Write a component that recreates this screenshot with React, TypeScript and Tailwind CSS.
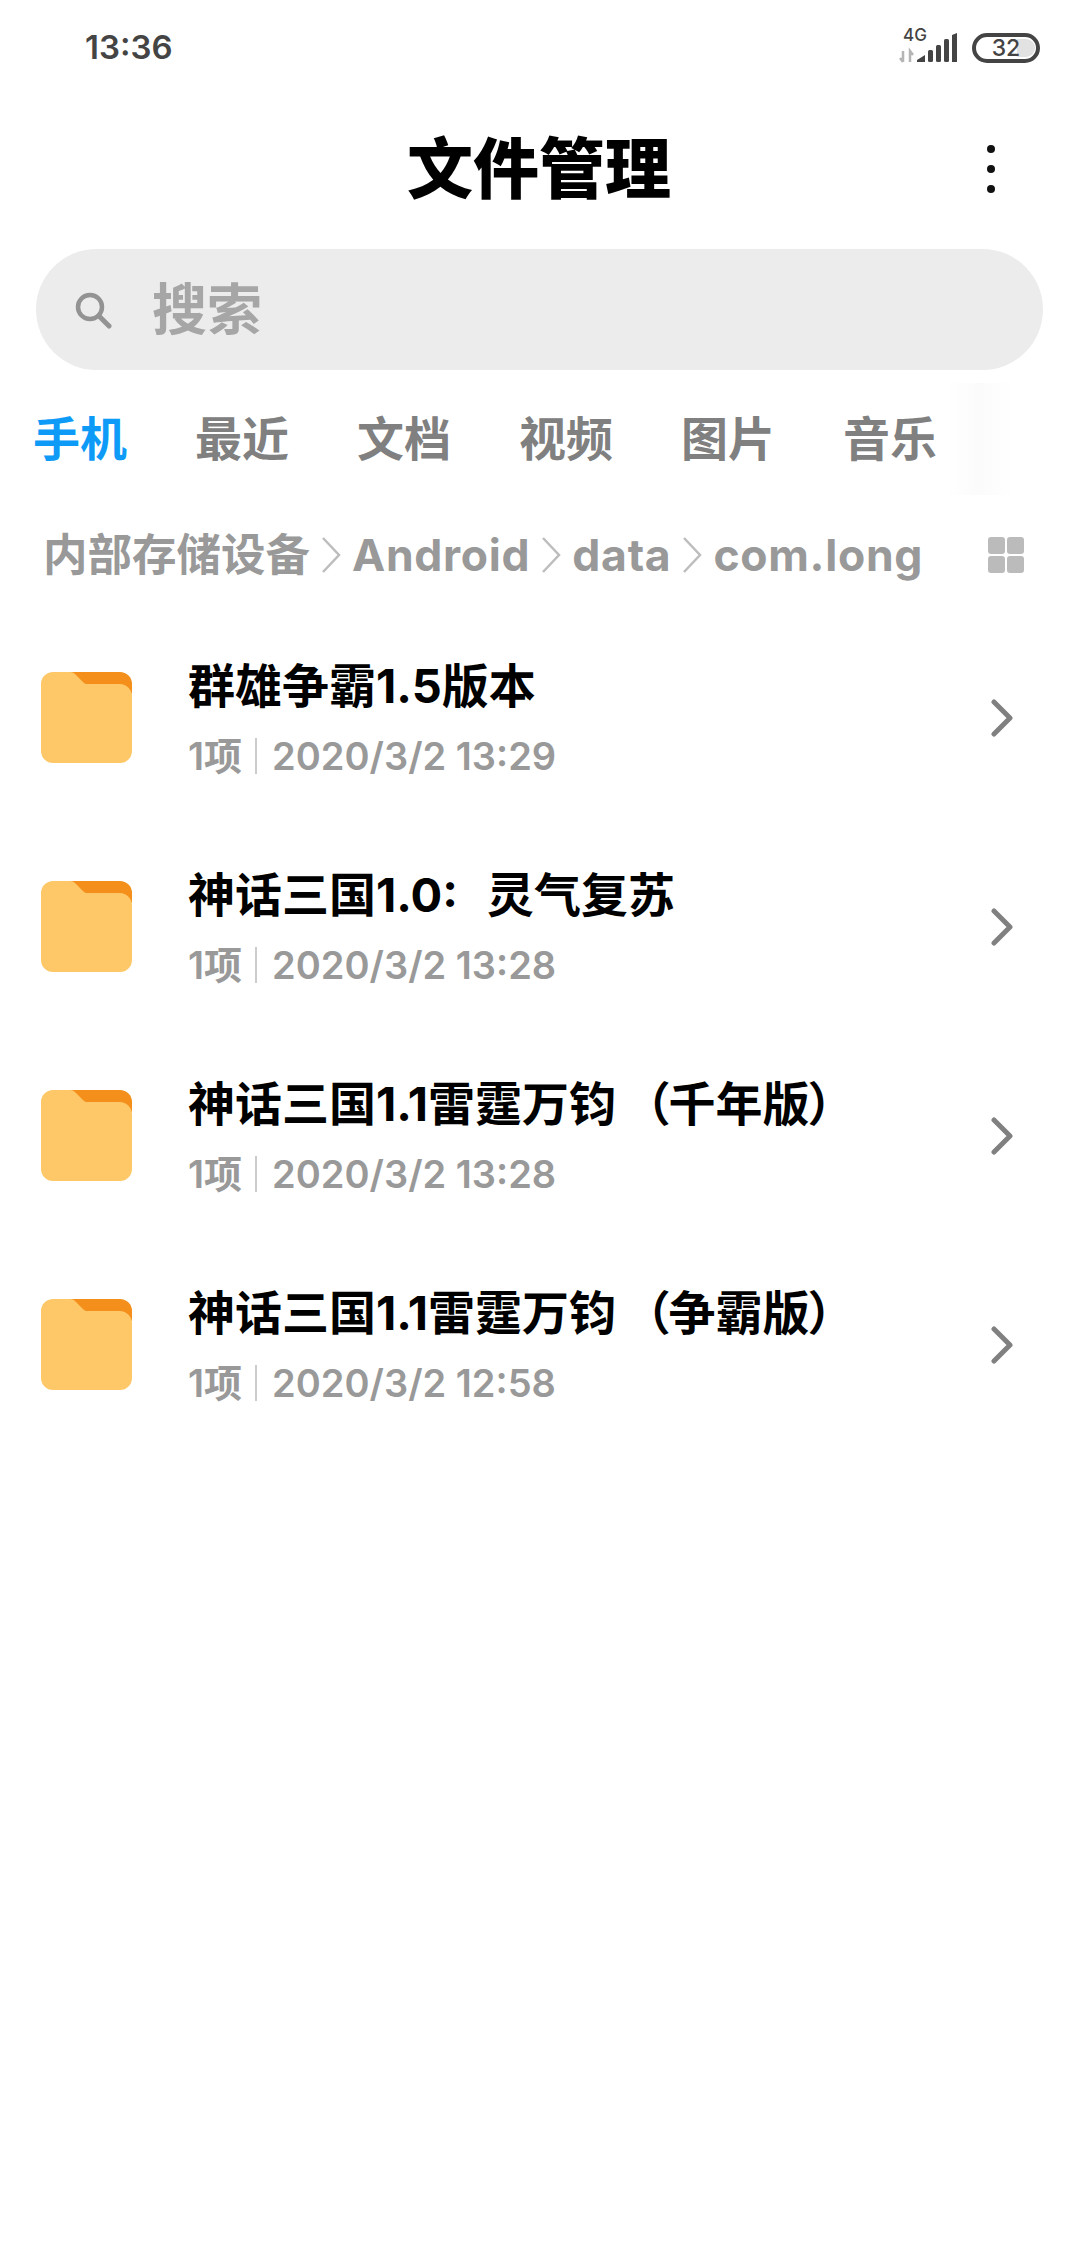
const FONT = "font-['Inter','Noto_Sans_CJK_SC',sans-serif]";

const tabs = ["手机", "最近", "文档", "视频", "图片", "音乐"];

const folders = [
  { name: "群雄争霸1.5版本", time: "2020/3/2 13:29" },
  { name: "神话三国1.0: 灵气复苏", time: "2020/3/2 13:28" },
  { name: "神话三国1.1雷霆万钧 （千年版）", time: "2020/3/2 13:28" },
  { name: "神话三国1.1雷霆万钧 （争霸版）", time: "2020/3/2 12:58" },
];

function Signal() {
  return (
    <svg width="62" height="32" viewBox="0 0 62 32" className="block">
      <path d="M6 20v11M3 27l3 4M13 31V20l3 4" stroke="#b5b5b5" strokeWidth="2.5" fill="none" />
      <path d="M20 31v-2l8-5v7z" fill="#444" />
      <rect x="31" y="19" width="5" height="12" rx="1.5" fill="#444" />
      <rect x="39" y="14" width="5" height="17" rx="1.5" fill="#444" />
      <rect x="47" y="8" width="5" height="23" rx="1.5" fill="#444" />
      <path d="M55 4l5-2v29h-5z" fill="#444" />
    </svg>
  );
}

function Folder() {
  return (
    <svg width="91" height="91" viewBox="0 0 91 91" className="block shrink-0">
      <path d="M28 0h51a12 12 0 0 1 12 12v10L40 14z" fill="#f38f1a" />
      <path
        d="M12 0h17c3 0 4 1 6 3l7 7c2 2 3 2 5 2h32c6 0 12 5 12 12v55a12 12 0 0 1-12 12H12A12 12 0 0 1 0 79V12A12 12 0 0 1 12 0z"
        fill="#fec868"
      />
    </svg>
  );
}

function Crumb() {
  return (
    <svg width="22" height="38" viewBox="0 0 22 38" className="block shrink-0 mx-[10px]">
      <path d="M3 2l16 17L3 36" fill="none" stroke="#bdbdbd" strokeWidth="2.5" />
    </svg>
  );
}

export default function App() {
  return (
    <div className={`w-[1080px] h-[2248px] bg-white overflow-hidden ${FONT}`}>
      {/* status bar */}
      <div className="h-[94px] flex items-center justify-between pl-[85px] pr-[40px]">
        <span className="text-[33px] leading-none font-semibold text-[#444]">13:36</span>
        <div className="flex items-end gap-[13px]">
          <div className="relative w-[62px]">
            <span className="absolute left-[6px] top-[-4px] text-[17px] leading-none font-medium text-[#444]">4G</span>
            <Signal />
          </div>
          <div className="relative w-[68px] h-[30px] rounded-full border-[4px] border-[#444] flex items-center justify-center">
            <div className="absolute right-[1px] top-[2px] bottom-[2px] w-[18px] rounded-r-full bg-[#e2e2e2]" />
            <span className="relative text-[23px] leading-none font-medium text-[#444]">32</span>
          </div>
        </div>
      </div>

      {/* title */}
      <div className="h-[152px] pb-[2px] grid grid-cols-[1fr_auto_1fr] items-center">
        <div />
        <h1 className="text-[66px] leading-none font-black text-black mr-[2px]">文件管理</h1>
        <div className="flex justify-end pr-[85px]">
          <div className="flex flex-col gap-[12px]">
            <span className="w-[8px] h-[8px] rounded-full bg-[#111]" />
            <span className="w-[8px] h-[8px] rounded-full bg-[#111]" />
            <span className="w-[8px] h-[8px] rounded-full bg-[#111]" />
          </div>
        </div>
      </div>

      {/* search */}
      <div className="mt-[3px] ml-[36px] w-[1007px] h-[121px] rounded-full bg-[#ececec] flex items-center pl-[38px] gap-[40px]">
        <svg width="38" height="38" viewBox="0 0 38 38" className="block shrink-0">
          <circle cx="16" cy="16" r="12" fill="none" stroke="#939393" strokeWidth="4.5" />
          <path d="M25 25l10 10" stroke="#939393" strokeWidth="5" strokeLinecap="round" />
        </svg>
        <span className="text-[55px] leading-none font-bold text-[#a6a6a6]">搜索</span>
      </div>

      {/* tabs */}
      <div className="relative h-[140px] pl-[33px] pb-[4px] flex items-center gap-[68px]">
        {tabs.map((t, i) => (
          <span
            key={t}
            className={`w-[94px] shrink-0 text-[47px] leading-none font-bold ${i === 0 ? "text-[#0d9bf7]" : "text-[#808080]"}`}
          >
            {t}
          </span>
        ))}
        <div className="absolute left-[946px] top-[13px] w-[66px] h-[112px] bg-gradient-to-r from-transparent via-[#fbfbfb] to-transparent" />
      </div>

      {/* breadcrumb */}
      <div className="h-[90px] pl-[43px] pr-[56px] flex items-center text-[44.5px] leading-none font-bold text-[#999]">
        <span>内部存储设备</span>
        <Crumb />
        <span className="tracking-[0.7px]">Android</span>
        <Crumb />
        <span className="tracking-[0.7px]">data</span>
        <Crumb />
        <span className="tracking-[0.7px]">com.long</span>
        <div className="ml-auto grid grid-cols-2 gap-[2px]">
          <span className="w-[17px] h-[17px] rounded-[3px] bg-[#bbb]" />
          <span className="w-[17px] h-[17px] rounded-[3px] bg-[#bbb]" />
          <span className="w-[17px] h-[17px] rounded-[3px] bg-[#bbb]" />
          <span className="w-[17px] h-[17px] rounded-[3px] bg-[#bbb]" />
        </div>
      </div>

      {/* list */}
      <div className="mt-[13px]">
        {folders.map((f) => (
          <div key={f.name} className="h-[209px] flex items-center pl-[41px] pr-[66px]">
            <Folder />
            <div className="ml-[56px] flex-1 min-w-0">
              <div className="text-[47px] leading-[58px] font-bold text-black whitespace-pre [font-feature-settings:'palt'] [word-spacing:18px]">
                {f.name}
              </div>
              <div className="mt-[19px] flex items-center text-[38px] leading-[44px] font-semibold text-[#999]">
                <span>1项</span>
                <span className="ml-[13px] mr-[15px] w-[2px] h-[36px] bg-[#ccc]" />
                <span>{f.time}</span>
              </div>
            </div>
            <svg width="24" height="38" viewBox="0 0 24 38" className="block shrink-0">
              <path d="M4 3l16 16L4 35" fill="none" stroke="#808080" strokeWidth="5" strokeLinecap="round" strokeLinejoin="round" />
            </svg>
          </div>
        ))}
      </div>
    </div>
  );
}
